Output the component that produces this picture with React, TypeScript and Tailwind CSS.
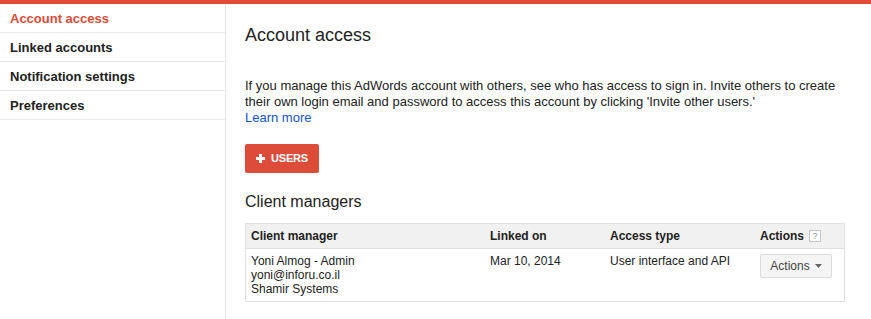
import React from "react";

const navItems = ["Account access", "Linked accounts", "Notification settings", "Preferences"];

const PlusIcon: React.FC = () => (
  <svg width="9" height="9" viewBox="0 0 9 9" className="block">
    <rect x="3" y="0" width="3" height="9" fill="#fff" />
    <rect x="0" y="3" width="9" height="3" fill="#fff" />
  </svg>
);

const App: React.FC = () => {
  return (
    <div
      className="w-full h-[319px] bg-white text-[#222] overflow-hidden flex flex-col"
      style={{ fontFamily: '"Liberation Sans", Arial, sans-serif' }}
    >
      <div className="h-[4px] bg-[#e3493b] shrink-0" />
      <div className="flex flex-1">
        {/* sidebar */}
        <div className="w-[226px] shrink-0 border-r border-[#e5e5e5]">
          {navItems.map((item, i) => (
            <div
              key={item}
              className={
                "h-[29px] border-b border-[#ebebeb] pl-[10px] pt-px text-[13px] font-bold leading-[28px] " +
                (i === 0 ? "text-[#dd4b39]" : "text-[#222]")
              }
            >
              {item}
            </div>
          ))}
        </div>

        {/* main */}
        <div className="pl-[19px] pt-[20px]">
          <h1 className="text-[18px] leading-[22px] font-normal text-[#222]">Account access</h1>
          <p className="mt-[32px] text-[13px] leading-[16px] text-[#222]">
            If you manage this AdWords account with others, see who has access to sign in. Invite others to create
            <br />
            their own login email and password to access this account by clicking 'Invite other users.'
            <br />
            <a className="text-[#15c] cursor-pointer">Learn more</a>
          </p>

          <button className="mt-[18px] w-[74px] h-[29px] rounded-[2px] bg-[#dd4b39] flex items-center justify-center gap-[6px] text-white text-[11px] font-bold tracking-[-0.2px]">
            <PlusIcon />
            <span>USERS</span>
          </button>

          <h2 className="mt-[19px] text-[16px] leading-[20px] font-normal text-[#222]">Client managers</h2>

          <div className="mt-[11px] w-[600px] border border-[#e0e0e0] text-[12px]">
            <div className="grid grid-cols-[238px_120px_150px_1fr] h-[25px] bg-[#f1f1f1] border-b border-[#e0e0e0] items-center font-bold text-[#222]">
              <div className="pl-[5px]">Client manager</div>
              <div className="pl-[6px]">Linked on</div>
              <div className="pl-[6px]">Access type</div>
              <div className="pl-[6px] flex items-center gap-[5px]">
                <span>Actions</span>
                <span className="w-[12px] h-[12px] border border-[#c6c6c6] bg-white text-[#999] text-[9px] font-normal leading-[10px] flex items-center justify-center">
                  ?
                </span>
              </div>
            </div>
            <div className="grid grid-cols-[238px_120px_150px_1fr] pt-[5px] pb-[5px] leading-[14px] text-[#222]">
              <div className="pl-[5px]">
                <div>Yoni Almog - Admin</div>
                <div>yoni@inforu.co.il</div>
                <div>Shamir Systems</div>
              </div>
              <div className="pl-[6px]">Mar 10, 2014</div>
              <div className="pl-[6px]">User interface and API</div>
              <div className="pl-[6px]">
                <button className="w-[72px] h-[24px] rounded-[2px] border border-[#dcdcdc] bg-[#f5f5f5] text-[#444] text-[12px] flex items-center justify-center gap-[5px]">
                  <span>Actions</span>
                  <svg width="7" height="4" viewBox="0 0 7 4">
                    <path d="M0 0 H7 L3.5 4 Z" fill="#666" />
                  </svg>
                </button>
              </div>
            </div>
          </div>
        </div>
      </div>
    </div>
  );
};

export default App;
